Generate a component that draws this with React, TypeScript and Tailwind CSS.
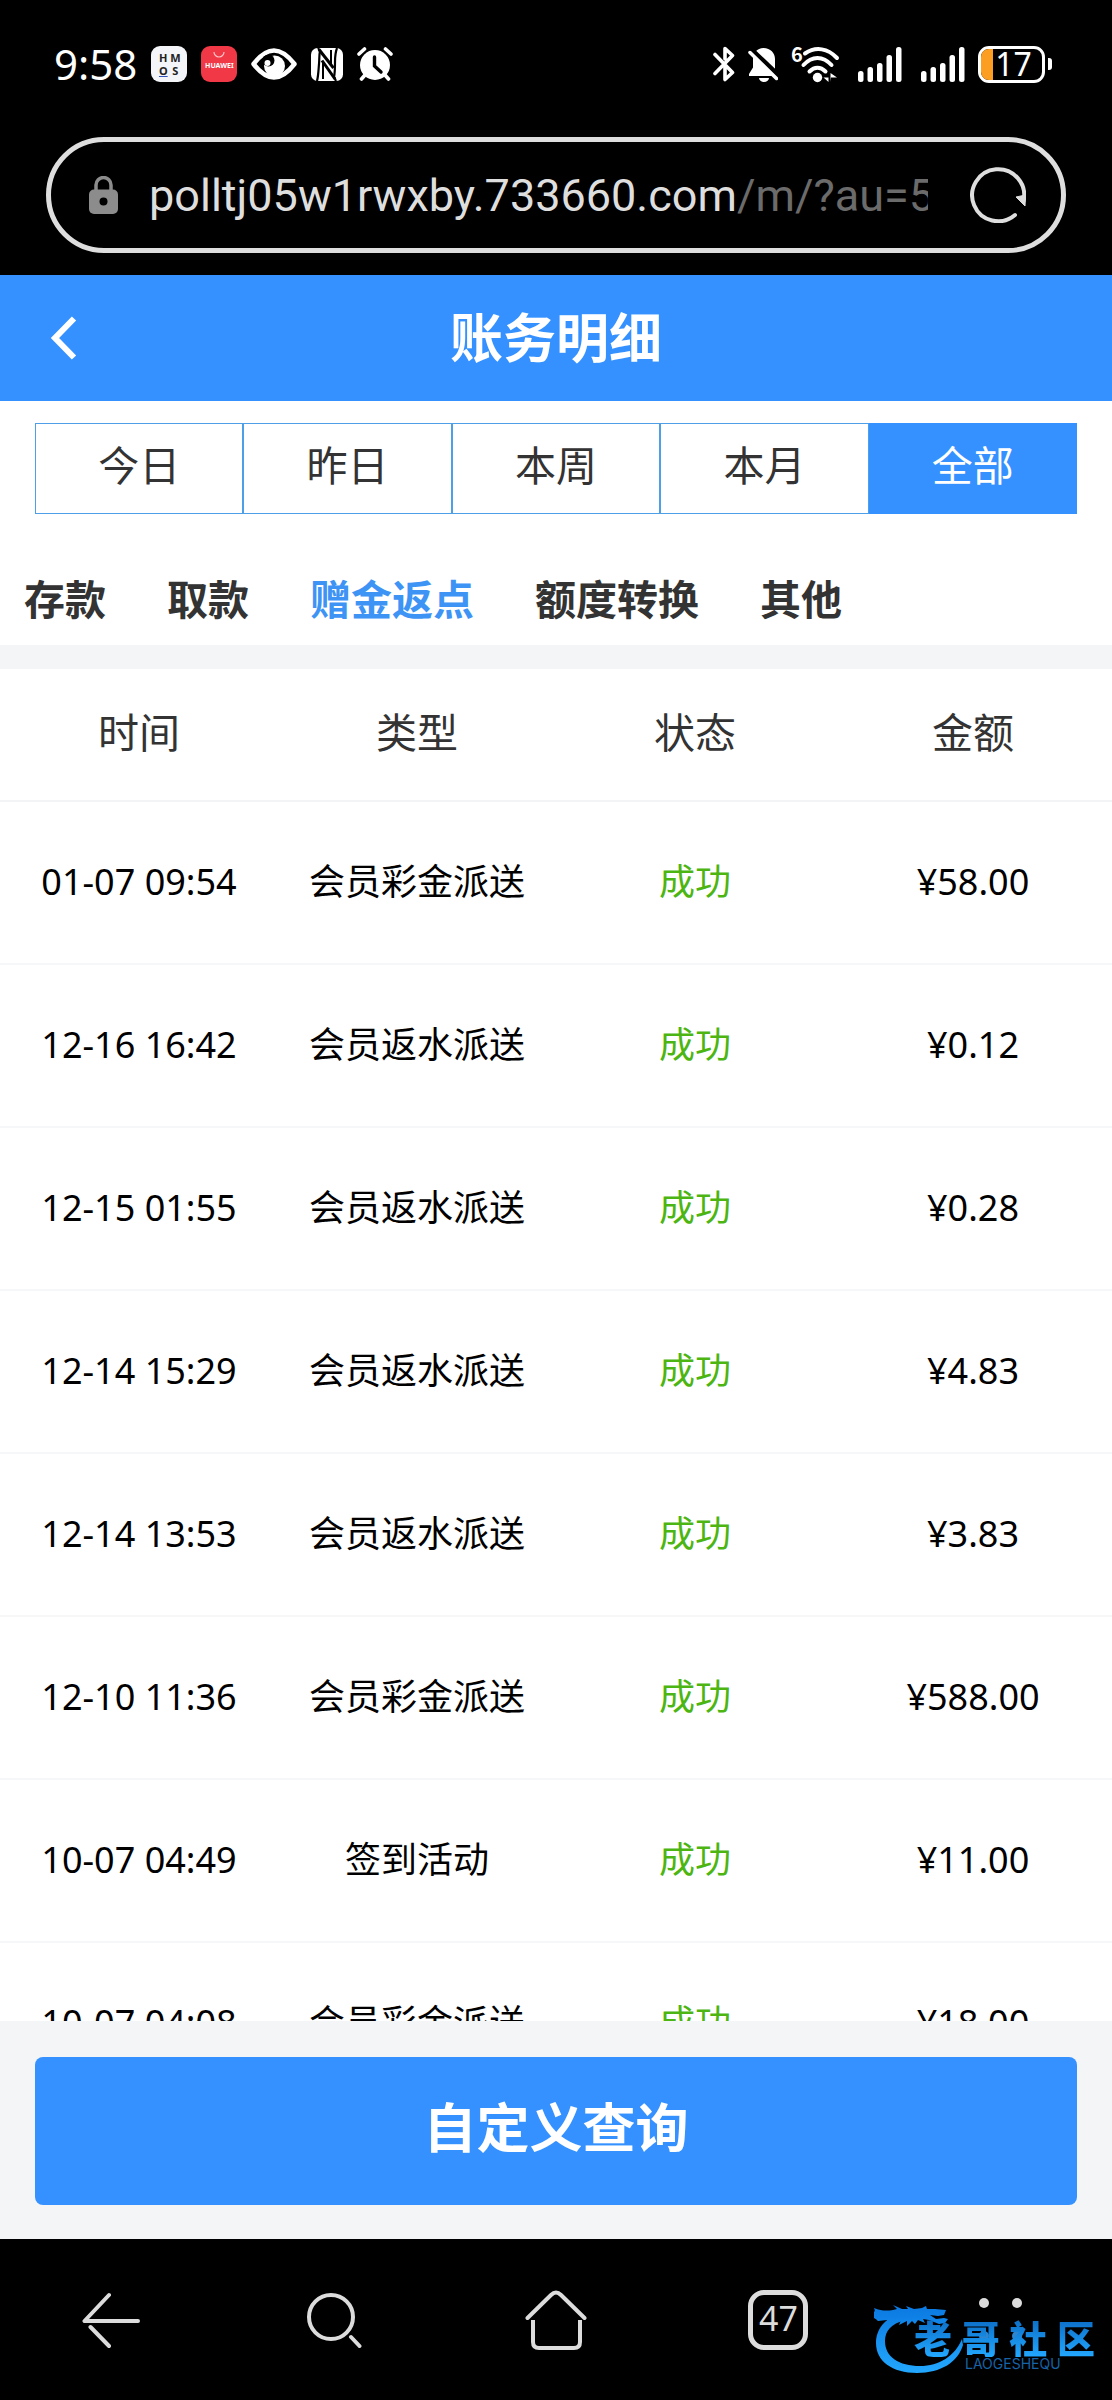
const periods = ["今日", "昨日", "本周", "本月", "全部"];
const categories = ["存款", "取款", "赠金返点", "额度转换", "其他"];
const records = [
  { time: "01-07 09:54", type: "会员彩金派送", amount: "¥58.00" },
  { time: "12-16 16:42", type: "会员返水派送", amount: "¥0.12" },
  { time: "12-15 01:55", type: "会员返水派送", amount: "¥0.28" },
  { time: "12-14 15:29", type: "会员返水派送", amount: "¥4.83" },
  { time: "12-14 13:53", type: "会员返水派送", amount: "¥3.83" },
  { time: "12-10 11:36", type: "会员彩金派送", amount: "¥588.00" },
  { time: "10-07 04:49", type: "签到活动", amount: "¥11.00" },
  { time: "10-07 04:08", type: "会员彩金派送", amount: "¥18.00" },
];

function EyeIcon() {
  return (
    <svg width="46" height="32" viewBox="0 0 46 32" fill="none">
      <path d="M2.500 16C9.500 7 16 2.500 23 2.500S36.500 7 43.500 16C36.500 25 30 29.500 23 29.500S9.500 25 2.500 16Z" stroke="#fff" strokeWidth="4.500" strokeLinejoin="round" />
      <circle cx="23.500" cy="18" r="10.500" fill="#fff" />
      <circle cx="17.500" cy="12.500" r="6" fill="#000" />
      <circle cx="16.500" cy="15" r="3" fill="#fff" />
    </svg>
  );
}

function NfcIcon() {
  return (
    <svg width="32" height="33" viewBox="0 0 32 33" fill="none">
      <rect width="32" height="33" rx="6.500" fill="#fff" />
      <path d="M7 0 9 3c-1 4-.500 8-1 13s-.500 11-2 17" stroke="#000" strokeWidth="2.200" />
      <path d="M26 0c-1.500 4-2 9-2 14s0 11-1 15l2 4" stroke="#000" strokeWidth="2.200" />
      <path d="M8 1.500 22.500 20" stroke="#000" strokeWidth="3" />
      <path d="M11 12.500 24 31" stroke="#000" strokeWidth="3" />
      <path d="M12 14v17" stroke="#000" strokeWidth="2" />
      <path d="M20 2v15" stroke="#000" strokeWidth="2" />
    </svg>
  );
}

function AlarmIcon() {
  return (
    <svg width="36" height="34" viewBox="0 0 36 34" fill="none" strokeLinecap="round">
      <circle cx="18" cy="18" r="15" fill="#fff" />
      <path d="M2 7 7.500 2M34 7l-5.500-5M8 28l-3.500 4M28 28l3.500 4" stroke="#fff" strokeWidth="3.600" />
      <path d="M17.500 10v9l6.500 6" stroke="#000" strokeWidth="3.400" />
    </svg>
  );
}

function BluetoothIcon() {
  return (
    <svg width="22" height="36" viewBox="0 0 22 36" fill="none" stroke="#fff" strokeWidth="3.600" strokeLinejoin="round" strokeLinecap="round">
      <path d="M2 8.500 19.500 26.500 12 33.500V22M12 13V2.500l7.500 7L2 27.500" />
    </svg>
  );
}

function MutedBellIcon() {
  return (
    <svg width="30" height="35" viewBox="0 0 30 35" fill="none">
      <path d="M15.500 1C9 1 5 6 5 12v8.500L1 27v2h28l-2-4V12C27 6 22.500 1 15.500 1Z" fill="#fff" />
      <path d="M11 31h10a5 4 0 0 1-10 0Z" fill="#fff" />
      <path d="M0-.5 31 29" stroke="#000" strokeWidth="5" />
      <path d="M2 5.500 28.500 31.500" stroke="#fff" strokeWidth="3.500" strokeLinecap="round" />
    </svg>
  );
}

function WifiIcon() {
  return (
    <svg className="overflow-visible" width="48" height="37" viewBox="0 0 48 37" fill="none">
      <text x="0" y="16" fill="#fff" fontSize="20" fontWeight="700" fontFamily="Noto Sans CJK SC, sans-serif">6</text>
      <path d="M14 7.500C25 0 37 2.500 46 12M12.500 19C21 9.500 32 9.500 40.500 19M18.500 25.500c5-5 11-5 16 0" stroke="#fff" strokeWidth="4" strokeLinecap="round" />
      <circle cx="26.500" cy="31.500" r="4.700" fill="#fff" />
      <path d="M37.500 27v9l-5-4.500h5M39.500 36v-9l6.500 4.500h-6" fill="#fff" />
    </svg>
  );
}

function SignalIcon() {
  return (
    <svg className="ml-[6px]" width="44" height="36" viewBox="0 0 44 36" fill="#fff">
      <rect x="0" y="25" width="5.500" height="11" rx="2.500" />
      <rect x="9.500" y="21" width="5.500" height="15" rx="2.500" />
      <rect x="19" y="17" width="5.500" height="19" rx="2.500" />
      <rect x="28.500" y="9" width="5.500" height="27" rx="2.500" />
      <rect x="38" y="1" width="5.500" height="35" rx="2.500" />
    </svg>
  );
}

function StatusBar() {
  return (
    <div className="flex h-[128px] items-center justify-between pr-[60px] pl-[54px] text-white">
      <div className="flex items-center gap-[14px]">
        <span className="text-[42px] leading-[42px]">9:58</span>
        <span className="grid size-9 grid-cols-2 place-items-center rounded-[9px] bg-[#f4f5f8] px-[6px] py-[5px] text-[11px] leading-[13px] font-bold text-[#222]">
          <span>H</span>
          <span>M</span>
          <span className="underline decoration-[#3355bb]">O</span>
          <span>S</span>
        </span>
        <span className="flex size-9 flex-col items-center rounded-[9px] bg-[#f03846] pt-[5px]">
          <svg width="12" height="7" viewBox="0 0 12 7" fill="none">
            <path d="M1 1a5 5 0 0 0 10 0" stroke="#ffc4c8" strokeWidth="1.200" />
          </svg>
          <span className="mt-[3px] text-[7px] leading-[10px] font-bold">HUAWEI</span>
        </span>
        <EyeIcon />
        <NfcIcon />
        <AlarmIcon />
      </div>
      <div className="flex items-center gap-[13px]">
        <BluetoothIcon />
        <MutedBellIcon />
        <WifiIcon />
        <SignalIcon />
        <SignalIcon />
        <div className="flex items-center gap-[3px]">
          <div className="flex h-[37px] w-[67px] items-center rounded-[11px] border-[3px] border-white">
            <span className="h-full w-3 rounded-l-[8px] bg-[#fb9e22]" />
            <span className="flex-1 pr-[8px] text-center text-[32px] leading-[32px]">17</span>
          </div>
          <span className="h-3 w-1 rounded-r-[3px] bg-white" />
        </div>
      </div>
    </div>
  );
}

function AddressBar() {
  return (
    <div className="mx-[46px] mt-[9px] mb-[22px] flex h-[116px] items-center rounded-full border-[5px] border-[#dedede] pr-[35px] pl-[38px]">
      <svg className="shrink-0" width="29" height="38" viewBox="0 0 29 38" fill="none">
        <path d="M7 16V9a7.500 7.500 0 0 1 15 0v7" stroke="#8c8c8c" strokeWidth="3.500" />
        <rect y="13.500" width="29" height="24.500" rx="5" fill="#8c8c8c" />
        <circle cx="14.500" cy="25.500" r="4" fill="#000" />
      </svg>
      <button type="button" aria-label="网址" className="ml-[31px] min-w-0 flex-1 overflow-hidden pt-[2px] text-left font-[Roboto] text-[45px] leading-[60px] whitespace-nowrap text-[#dedede]">
        polltj05w1rwxby.733660.com<span className="text-[#6b6b6b]">/m/?au=5</span>
      </button>
      <button type="button" aria-label="刷新" className="ml-[42px] shrink-0">
        <svg width="56" height="56" viewBox="0 0 56 56" fill="none">
          <path d="M45 48A26 26 0 1 1 53.500 34" stroke="#dedede" strokeWidth="4" strokeLinecap="round" />
          <path d="M46 30l9.500-2-.500 11z" fill="#dedede" stroke="#dedede" strokeLinejoin="round" />
        </svg>
      </button>
    </div>
  );
}

function RecordTable() {
  return (
    <table className="w-full table-fixed text-center">
      <thead>
        <tr className="h-[132px] border-b-2 border-[#f3f4f6] text-[41px] text-[#333]">
          {["时间", "类型", "状态", "金额"].map((label) => (
            <th key={label} scope="col" className="pb-1 font-normal">
              {label}
            </th>
          ))}
        </tr>
      </thead>
      <tbody>
        {records.map((record) => (
          <tr key={record.time} className="h-[163px] border-b-2 border-[#f6f7f8] text-[36px] text-black">
            <td className="pb-0.5">{record.time}</td>
            <td className="pb-0.5">{record.type}</td>
            <td className="pb-0.5 text-[#4db512]">成功</td>
            <td className="pb-0.5">{record.amount}</td>
          </tr>
        ))}
      </tbody>
    </table>
  );
}

function Watermark() {
  return (
    <div className="pointer-events-none absolute right-4 bottom-[22px] h-[80px] w-[222px]">
      <svg width="222" height="80" viewBox="0 0 222 80" fill="none">
        <defs>
          <linearGradient id="dragon" gradientUnits="userSpaceOnUse" x1="0" y1="6" x2="0" y2="76">
            <stop offset="0" stopColor="#0a78e0" />
            <stop offset="1" stopColor="#23a8ff" />
          </linearGradient>
        </defs>
        <path
          fill="url(#dragon)"
          d="M26 16C11 20 2 31 2 45c0 18 16 30 41 30 24 0 41-11 46-28l-1-6C81 58 65 68 46 68 25 68 11 59 11 43c0-10 6-17 20-21Z"
        />
        <path
          fill="url(#dragon)"
          d="M0 10c7 3 13 3 19 2l4-1-4-4 9 4 6 0-2-3 8 3 8-1 4-2 1 3 8 0 11 1-2 5-6 1-8-1 6 4 8-1 4 1-3 4-6 1-10-4-6-1 2 4-7-3-3 4-3-3-5 5 0-5-8 4 2-5-8 2-5 3-1-5-9 1c-4-4-9-5-14-5C3 14 1 13 0 10Z"
        />
      </svg>
      <div className="absolute top-[22px] left-[40px] flex w-[181px] justify-between bg-linear-to-b from-[#0d6fc8] to-[#23a8ff] bg-clip-text text-[38px] leading-[37px] font-black text-transparent">
        <span>老</span>
        <span>哥</span>
        <span>社</span>
        <span>区</span>
      </div>
      <div className="absolute top-[60px] left-[91px] font-[Inter] text-[14px] leading-[12px] text-[#1763a8]">LAOGESHEQU</div>
    </div>
  );
}

function BrowserNav() {
  return (
    <nav className="relative grid h-[161px] grid-cols-5 place-items-center bg-black">
      <button type="button" aria-label="后退">
        <svg width="58" height="58" viewBox="0 0 58 58" fill="none" stroke="#dcdcdc" strokeWidth="4" strokeLinecap="round">
          <path d="M27 4 2.500 30H56M8.500 36 27 55" strokeLinejoin="round" />
        </svg>
      </button>
      <button type="button" aria-label="搜索">
        <svg width="56" height="56" viewBox="0 0 56 56" fill="none" stroke="#dcdcdc" strokeWidth="4" strokeLinecap="round">
          <circle cx="25" cy="25" r="22" />
          <path d="m45 45 8.500 9" />
        </svg>
      </button>
      <button type="button" aria-label="主页">
        <svg width="62" height="60" viewBox="0 0 62 60" fill="none" stroke="#dcdcdc" strokeWidth="4" strokeLinecap="round">
          <path d="M2.500 28 26 5q5-5 10 0l23.500 23" />
          <path d="M8 30v22q0 6 6 6h35q6 0 6-6V30" strokeLinecap="butt" />
        </svg>
      </button>
      <button type="button" aria-label="标签页" className="flex size-[60px] items-center justify-center rounded-[16px] border-[5px] border-[#dcdcdc] pb-1 text-[34px] leading-[34px] text-[#dcdcdc]">
        47
      </button>
      <button type="button" aria-label="更多" className="grid grid-cols-2 gap-[23px]">
        <span className="size-[10px] rounded-full bg-[#dcdcdc]" />
        <span className="size-[10px] rounded-full bg-[#dcdcdc]" />
        <span className="size-[10px] rounded-full bg-[#2f86cf]" />
        <span className="size-[10px] rounded-full bg-[#2f86cf]" />
      </button>
      <Watermark />
    </nav>
  );
}

export default function App() {
  return (
    <div className="flex h-screen flex-col overflow-hidden bg-white font-['Noto_Sans','Noto_Sans_CJK_SC',sans-serif]">
      <div className="shrink-0 overflow-hidden bg-black">
        <StatusBar />
        <AddressBar />
      </div>

      <header className="grid h-[126px] shrink-0 grid-cols-[1fr_auto_1fr] items-center bg-[#3491ff] px-[50px] text-white">
        <button type="button" aria-label="返回" className="justify-self-start">
          <svg width="27" height="44" viewBox="0 0 27 44" fill="none">
            <path d="M24 2.500 5 22l19 19.500" stroke="#fff" strokeWidth="6" />
          </svg>
        </button>
        <h1 className="text-[53px] leading-[60px] font-bold">账务明细</h1>
      </header>

      <div className="mx-[35px] mt-[22px] grid shrink-0 grid-cols-5">
        {periods.map((label) => (
          <button
            key={label}
            type="button"
            className={
              label === "全部"
                ? "h-[91px] border border-[#3491ff] bg-[#3491ff] pb-1.5 text-[41px] text-white"
                : "h-[91px] border border-[#4f9fe8] pb-1.5 text-[41px] text-[#333]"
            }
          >
            {label}
          </button>
        ))}
      </div>

      <div className="flex shrink-0 gap-[61px] border-b-[24px] border-[#f4f5f7] px-6 pt-[60px] pb-[21px]">
        {categories.map((label) => (
          <button
            key={label}
            type="button"
            className={
              label === "赠金返点"
                ? "text-[41px] leading-[50px] font-bold text-[#3e94f5]"
                : "text-[41px] leading-[50px] font-bold text-[#333]"
            }
          >
            {label}
          </button>
        ))}
      </div>

      <main className="min-h-0 flex-1 overflow-hidden">
        <RecordTable />
      </main>

      <div className="shrink-0 bg-[#f4f5f7] px-[35px] pt-9 pb-[34px]">
        <button type="button" className="h-[148px] w-full rounded-lg bg-[#3491ff] pb-1.5 text-[53px] font-bold text-white">
          自定义查询
        </button>
      </div>

      <BrowserNav />
    </div>
  );
}
